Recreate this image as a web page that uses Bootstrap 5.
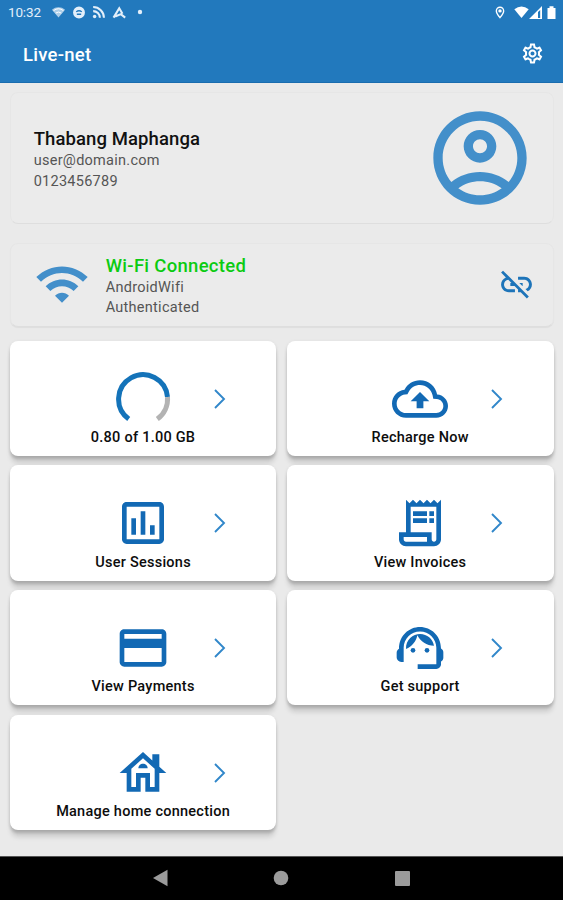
<!DOCTYPE html>
<html lang="en">
<head>
<meta charset="utf-8">
<meta name="viewport" content="width=device-width, initial-scale=1">
<title>Live-net</title>
<link href="https://cdn.jsdelivr.net/npm/bootstrap@5.3.0/dist/css/bootstrap.min.css" rel="stylesheet">
<style>
body{font-family:Roboto,"Liberation Sans",sans-serif;background:#eaeaea;color:#111;height:900px;overflow:hidden}
svg{display:block;flex:none;fill:currentColor}
.app-head{background:#2279bd;color:#fff;height:83px;border-bottom:1px solid #1a6cae}
.status-row{height:24px;padding:0 6px 0 8px}
.clock{font-size:13.5px;line-height:24px;width:43px;color:#e3effa;letter-spacing:-.15px}
.notif{gap:6px;color:#e3effa}
.app-bar{height:59px;padding:0 20px 0 23px}
.app-title{font-size:18.5px;font-weight:500;line-height:24px;letter-spacing:.25px;padding-top:2px}
.app-main{height:773px;padding:8.5px 9.5px 0 9.7px}
.info-panel{background:#ebebeb;border-radius:8px;border:1px solid #e6e6e6;border-bottom-color:#dedede}
.profile{height:132px;padding:0 17px 0 23px;margin-bottom:19px}
.wifi{height:84px;padding:0 18px 1px 23px;margin-bottom:14px;box-shadow:0 1px 1px rgba(0,0,0,.05)}
.info-text{padding-top:4px}
.info-head{font-size:18.5px;font-weight:500;line-height:24px;letter-spacing:.1px}
.profile .info-line:nth-child(2){margin-top:.6px}
.info-line{font-size:14.5px;line-height:20.5px;color:#555;letter-spacing:.27px}
.online{color:#0bcb12;letter-spacing:.3px}
.soft-blue{color:#438fca}
.link-off{color:#1d74b9}
.tiles{display:grid;grid-template-columns:1fr 1fr;grid-auto-rows:115.5px;gap:9.2px 10.3px}
.tile{background:#fff;border-radius:8px;color:#0d0d0d;box-shadow:0 8px 5px -1px rgba(0,0,0,.13),0 3px 3px rgba(0,0,0,.13),0 1px 4px rgba(0,0,0,.07);padding-top:30px}
.tile-row{display:grid;grid-template-columns:1fr 56px 1fr;align-items:center;color:#1269b4}
.tile-row .go{grid-column:3;margin-left:42px;color:#3187ca}
.tile-row .pic{grid-column:2}
.tile-label{font-size:14.5px;font-weight:500;line-height:20px;text-align:center;letter-spacing:.25px;padding-top:1.5px}
.nav-strip{background:#000;color:#9b9b9b;height:44px;padding:0 152px 1px;border-top:1px solid #555}
</style>
</head>
<body class="d-flex flex-column">
<header class="app-head flex-shrink-0">
  <div class="status-row d-flex align-items-center">
    <span class="clock">10:32</span>
    <div class="notif d-flex align-items-center">
      <svg width="15" height="12" viewBox="0 0 24 22"><path d="M12 21 0 7C7 1 17 1 24 7z" opacity=".72"/><path d="M3 8.500Q12 1.500 21 8.500M7 13Q12 9 17 13" fill="none" stroke="#fff" stroke-width="1.800"/></svg>
      <svg width="14" height="13" viewBox="0 0 24 24"><path fill-rule="evenodd" d="M12 1a11 11 0 1 0 0 22 11 11 0 0 0 0-22zM6 10Q12 5 18 10l-1.500 1.500Q12 8.500 7.500 11.500zM8 14h8v2.500H8z"/></svg>
      <svg width="14" height="14" viewBox="0 0 24 24"><circle cx="4.500" cy="19.500" r="3"/><path d="M2 10.500A11.500 11.500 0 0 1 13.500 22M2 3.500A18.500 18.500 0 0 1 20.500 22" fill="none" stroke="currentColor" stroke-width="3.500"/></svg>
      <svg width="15" height="13" viewBox="0 0 26 24"><path d="M2 21.500 12.500 4 18.500 14.500M5 19.500 15.500 15l8 6.500" fill="none" stroke="currentColor" stroke-width="3.800"/></svg>
      <svg class="ms-1" width="6" height="6" viewBox="0 0 6 6"><circle cx="3" cy="3" r="2.200"/></svg>
    </div>
    <div class="d-flex align-items-center ms-auto">
      <svg width="12" height="13" viewBox="2 0 20 24"><path fill-rule="evenodd" d="M12 1a8 8 0 0 0-8 8c0 5.500 8 14 8 14s8-8.500 8-14a8 8 0 0 0-8-8zm0 2.500A5.500 5.500 0 0 1 17.500 9c0 3-3 7.500-5.500 10.300C9.500 16.500 6.500 12 6.500 9A5.500 5.500 0 0 1 12 3.500z"/><circle cx="12" cy="9" r="3.200"/></svg>
      <svg class="ms-2" width="15" height="12" viewBox="0 0 15 12"><path d="M7.500 12 .3 3.200Q7.500-2 14.700 3.200z"/></svg>
      <svg width="13" height="13" viewBox="0 0 13 13"><path fill-rule="evenodd" d="M0 13 13 0v13zM9 6v6h2.200V4z"/></svg>
      <svg class="ms-1" width="11" height="13" viewBox="0 0 11 13"><path d="M1.500 2h2V.3h4V2h2v11h-8z"/></svg>
    </div>
  </div>
  <div class="app-bar d-flex align-items-center justify-content-between">
    <span class="app-title">Live-net</span>
    <svg width="21" height="21" viewBox="1.500 1.500 21 21"><path d="M19.430 12.980c.04-.32.07-.64.07-.98 0-.34-.03-.66-.07-.98l2.110-1.650c.19-.15.24-.42.12-.64l-2-3.460c-.09-.16-.26-.25-.44-.25-.06 0-.12.010-.17.030l-2.490 1c-.52-.4-1.080-.73-1.690-.98l-.38-2.650C14.460 2.180 14.250 2 14 2h-4c-.25 0-.46.18-.49.42l-.38 2.650c-.61.25-1.170.59-1.690.98l-2.490-1c-.06-.02-.12-.03-.18-.03-.17 0-.34.09-.43.25l-2 3.460c-.13.22-.07.49.12.64l2.110 1.650c-.04.32-.07.65-.07.98 0 .33.03.66.07.98l-2.110 1.650c-.19.15-.24.42-.12.64l2 3.460c.09.16.26.25.44.25.06 0 .12-.01.17-.03l2.490-1c.52.4 1.080.73 1.690.98l.38 2.650c.03.24.24.42.49.42h4c.25 0 .46-.18.49-.42l.38-2.650c.61-.25 1.170-.59 1.690-.98l2.490 1c.06.02.12.03.18.03.17 0 .34-.09.43-.25l2-3.460c.12-.22.07-.49-.12-.64l-2.110-1.650zm-1.980-1.710c.04.31.05.52.05.73 0 .21-.02.43-.05.73l-.14 1.130.89.7 1.080.84-.7 1.210-1.270-.51-1.040-.42-.9.68c-.43.32-.84.56-1.250.73l-1.060.43-.16 1.130-.2 1.350h-1.400l-.19-1.350-.16-1.130-1.060-.43c-.43-.18-.83-.41-1.230-.71l-.91-.7-1.060.43-1.270.51-.7-1.210 1.080-.84.89-.7-.14-1.130c-.03-.31-.05-.54-.05-.74s.02-.43.05-.73l.14-1.130-.89-.7-1.080-.84.7-1.210 1.270.51 1.040.42.9-.68c.43-.32.84-.56 1.250-.73l1.060-.43.16-1.130.2-1.350h1.390l.19 1.350.16 1.130 1.060.43c.43.18.83.41 1.230.71l.91.7 1.060-.43 1.270-.51.7 1.210-1.070.85-.89.7.14 1.130zM12 8c-2.210 0-4 1.790-4 4s1.790 4 4 4 4-1.790 4-4-1.790-4-4-4zm0 6c-1.100 0-2-.9-2-2s.9-2 2-2 2 .9 2 2-.9 2-2 2z"/></svg>
  </div>
</header>

<main class="app-main flex-shrink-0">
  <section class="info-panel profile d-flex align-items-center justify-content-between">
    <div class="info-text">
      <div class="info-head">Thabang Maphanga</div>
      <div class="info-line">user@domain.com</div>
      <div class="info-line">0123456789</div>
    </div>
    <svg class="soft-blue" width="112" height="112" viewBox="0 0 24 24"><path d="M12 2C6.480 2 2 6.480 2 12s4.480 10 10 10 10-4.480 10-10S17.520 2 12 2zM7.350 18.500C8.660 17.560 10.260 17 12 17s3.340.56 4.650 1.500C15.340 19.440 13.740 20 12 20s-3.340-.56-4.650-1.500zm10.790-1.380C16.450 15.800 14.320 15 12 15s-4.450.8-6.140 2.120C4.700 15.730 4 13.950 4 12c0-4.420 3.580-8 8-8s8 3.580 8 8c0 1.950-.7 3.730-1.860 5.120z"/><path d="M12 6c-1.930 0-3.500 1.570-3.500 3.500S10.070 13 12 13s3.500-1.570 3.500-3.500S13.930 6 12 6zm0 5c-.83 0-1.500-.67-1.500-1.500S11.170 8 12 8s1.500.67 1.500 1.500S12.830 11 12 11z"/></svg>
  </section>

  <section class="info-panel wifi d-flex align-items-center">
    <svg class="soft-blue" width="56" height="56" viewBox="0 0 24 24"><path d="M1 9l2 2c4.970-4.970 13.030-4.970 18 0l2-2C16.930 2.930 7.080 2.930 1 9zm8 8l3 3 3-3c-1.650-1.660-4.340-1.660-6 0zm-4-4l2 2c2.760-2.760 7.240-2.760 10 0l2-2C15.140 9.140 8.870 9.140 5 13z"/></svg>
    <div class="info-text ms-3 ps-px">
      <div class="info-head online">Wi-Fi Connected</div>
      <div class="info-line">AndroidWifi</div>
      <div class="info-line">Authenticated</div>
    </div>
    <svg class="link-off ms-auto" width="37" height="37" viewBox="0 0 24 24"><path d="M17 7h-4v1.900h4c1.710 0 3.100 1.390 3.100 3.100 0 1.430-.98 2.630-2.310 2.980l1.460 1.460C20.880 15.610 22 13.950 22 12c0-2.760-2.240-5-5-5zm-1 4h-2.190l2 2H16v-2zM2 4.270l3.110 3.110C3.290 8.120 2 9.910 2 12c0 2.760 2.240 5 5 5h4v-1.900H7c-1.710 0-3.100-1.390-3.100-3.100 0-1.590 1.210-2.900 2.760-3.070L8.730 11H8v2h2.730L13 15.270V17h1.730l4.010 4L20 19.740 3.270 3 2 4.270z"/></svg>
  </section>

  <section class="tiles">
    <div class="tile">
      <div class="tile-row">
        <svg class="pic" width="56" height="56" viewBox="0 0 56 56"><path d="M13.700 48A24.500 24.500 0 1 1 52.500 26" fill="none" stroke="#1473b9" stroke-width="5"/><path d="M52.500 26A24.500 24.500 0 0 1 42.300 48" fill="none" stroke="#b3b3b3" stroke-width="5"/></svg>
        <svg class="go" width="14" height="22" viewBox="0 0 14 22"><path d="M2 2l9 9-9 9" fill="none" stroke="currentColor" stroke-width="1.900"/></svg>
      </div>
      <div class="tile-label">0.80 of 1.00 GB</div>
    </div>
    <div class="tile">
      <div class="tile-row">
        <svg class="pic" width="56" height="56" viewBox="0 0 24 24"><path d="M19.350 10.040C18.670 6.590 15.640 4 12 4 9.110 4 6.600 5.640 5.350 8.040 2.340 8.360 0 10.910 0 14c0 3.310 2.690 6 6 6h13c2.760 0 5-2.240 5-5 0-2.640-2.050-4.780-4.650-4.960zM19 18H6c-2.210 0-4-1.790-4-4 0-2.050 1.530-3.760 3.560-3.970l1.070-.11.5-.95C8.080 7.140 9.940 6 12 6c2.620 0 4.880 1.860 5.390 4.430l.3 1.500 1.530.11c1.560.1 2.780 1.410 2.780 2.960 0 1.650-1.350 3-3 3zM8 13h2.550v3h2.900v-3H16l-4-4z"/></svg>
        <svg class="go" width="14" height="22" viewBox="0 0 14 22"><path d="M2 2l9 9-9 9" fill="none" stroke="currentColor" stroke-width="1.900"/></svg>
      </div>
      <div class="tile-label">Recharge Now</div>
    </div>
    <div class="tile">
      <div class="tile-row">
        <svg class="pic" width="56" height="56" viewBox="0 0 24 24"><path d="M9 17H7v-7h2v7zm4 0h-2V7h2v10zm4 0h-2v-4h2v4zm2 2H5V5h14v14zm0-16H5c-1.100 0-2 .9-2 2v14c0 1.100.9 2 2 2h14c1.100 0 2-.9 2-2V5c0-1.100-.9-2-2-2z"/></svg>
        <svg class="go" width="14" height="22" viewBox="0 0 14 22"><path d="M2 2l9 9-9 9" fill="none" stroke="currentColor" stroke-width="1.900"/></svg>
      </div>
      <div class="tile-label">User Sessions</div>
    </div>
    <div class="tile">
      <div class="tile-row">
        <svg class="pic" width="56" height="56" viewBox="0 0 24 24"><path d="M19.500 3.500L18 2l-1.500 1.500L15 2l-1.500 1.500L12 2l-1.500 1.500L9 2 7.500 3.500 6 2v14H3v3c0 1.660 1.340 3 3 3h12c1.660 0 3-1.340 3-3V2l-1.500 1.500zM15 20H6c-.55 0-1-.45-1-1v-1h10v2zm4-1c0 .55-.45 1-1 1s-1-.45-1-1v-3H8V5h11v14zM9 7h6v2H9zM16 7h2v2h-2zM9 10h6v2H9zM16 10h2v2h-2z"/></svg>
        <svg class="go" width="14" height="22" viewBox="0 0 14 22"><path d="M2 2l9 9-9 9" fill="none" stroke="currentColor" stroke-width="1.900"/></svg>
      </div>
      <div class="tile-label">View Invoices</div>
    </div>
    <div class="tile">
      <div class="tile-row">
        <svg class="pic" width="56" height="56" viewBox="0 0 24 24"><path d="M20 4H4c-1.110 0-1.990.89-1.990 2L2 18c0 1.110.89 2 2 2h16c1.110 0 2-.89 2-2V6c0-1.110-.89-2-2-2zm0 14H4v-6h16v6zm0-10H4V6h16v2z"/></svg>
        <svg class="go" width="14" height="22" viewBox="0 0 14 22"><path d="M2 2l9 9-9 9" fill="none" stroke="currentColor" stroke-width="1.900"/></svg>
      </div>
      <div class="tile-label">View Payments</div>
    </div>
    <div class="tile">
      <div class="tile-row">
        <svg class="pic" width="56" height="56" viewBox="0 0 24 24"><path d="M21 12.220C21 6.730 16.740 3 12 3c-4.690 0-9 3.650-9 9.280-.6.34-1 .98-1 1.720v2c0 1.100.9 2 2 2h1v-6.100c0-3.870 3.130-7 7-7s7 3.130 7 7V19h-8v2h8c1.100 0 2-.9 2-2v-1.220c.59-.31 1-.92 1-1.640v-2.300c0-.7-.41-1.310-1-1.620z"/><circle cx="9" cy="13" r="1"/><circle cx="15" cy="13" r="1"/><path d="M18 11.030C17.520 8.180 15.040 6 12.050 6c-3.030 0-6.290 2.510-6.030 6.450 2.470-1.010 4.330-3.210 4.860-5.890 1.310 2.630 4 4.440 7.120 4.470z"/></svg>
        <svg class="go" width="14" height="22" viewBox="0 0 14 22"><path d="M2 2l9 9-9 9" fill="none" stroke="currentColor" stroke-width="1.900"/></svg>
      </div>
      <div class="tile-label">Get support</div>
    </div>
    <div class="tile">
      <div class="tile-row">
        <svg class="pic" width="56" height="56" viewBox="0 0 24 24"><path d="M19 9.300V4h-3v2.600L12 3 2 12h3v8h6v-6h2v6h6v-8h3L19 9.300zM17 18h-2v-6H9v6H7v-7.810l5-4.500 5 4.500V18z"/><path d="M10 10h4c0-1.100-.9-2-2-2s-2 .9-2 2z"/></svg>
        <svg class="go" width="14" height="22" viewBox="0 0 14 22"><path d="M2 2l9 9-9 9" fill="none" stroke="currentColor" stroke-width="1.900"/></svg>
      </div>
      <div class="tile-label">Manage home connection</div>
    </div>
  </section>
</main>

<footer class="nav-strip d-flex align-items-center justify-content-between flex-shrink-0">
  <svg width="16" height="18" viewBox="0 0 16 18"><path d="M1 9 15.500.8v16.400z"/></svg>
  <svg width="16" height="16" viewBox="0 0 16 16"><circle cx="8" cy="8" r="7.300"/></svg>
  <svg width="17" height="17" viewBox="0 0 17 17"><rect x="1" y="1" width="15" height="15" rx="1"/></svg>
</footer>
<script src="https://cdn.jsdelivr.net/npm/bootstrap@5.3.0/dist/js/bootstrap.bundle.min.js"></script>
</body>
</html>
